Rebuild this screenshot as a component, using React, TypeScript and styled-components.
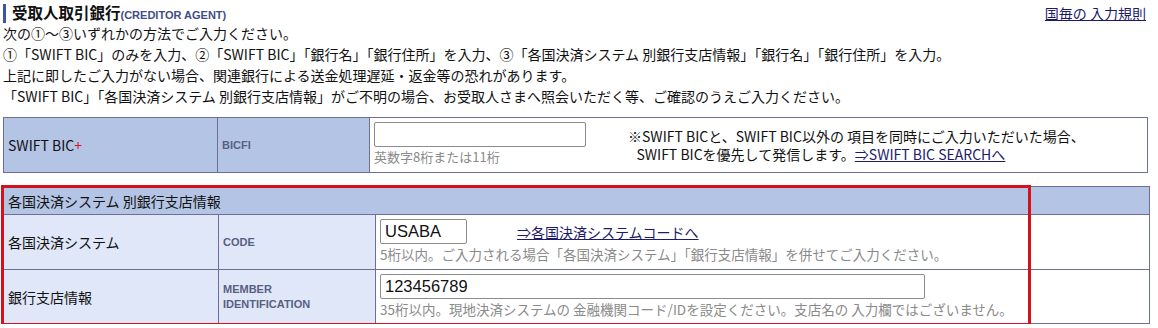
import React from "react";
import styled, { createGlobalStyle } from "styled-components";

const Global = createGlobalStyle`
  html, body { margin: 0; padding: 0; background: #fff; }
  body {
    font-family: "Noto Sans CJK JP", "Liberation Sans", sans-serif;
    font-size: 14px;
    color: #111;
  }
`;

const Page = styled.div`
  width: 1158px;
  padding: 4px 0 0 3px;
  box-sizing: border-box;
`;

const TitleRow = styled.div`
  display: flex;
  justify-content: space-between;
  align-items: center;
  height: 18px;
  padding-right: 12px;
`;

const Title = styled.h2`
  margin: 0;
  display: flex;
  align-items: baseline;
  border-left: 3px solid #3d55a6;
  padding-left: 6px;
  font-size: 15.5px;
  line-height: 16px;
  font-weight: bold;
  color: #111;
  font-feature-settings: "palt";
`;

const TitleSub = styled.span`
  font-family: "Liberation Sans", sans-serif;
  font-size: 11px;
  font-weight: bold;
  color: #3f4d86;
`;

const NavLink = styled.a<{ $size?: number }>`
  color: #1c1a6a;
  text-decoration: underline;
  font-size: ${(p) => p.$size ?? 14}px;
  cursor: pointer;
`;

const Intro = styled.div`
  margin-top: 1px;
  line-height: 21px;
  font-size: 14px;
`;

const Grid = styled.div<{ $cols: string; $width: number }>`
  display: grid;
  grid-template-columns: ${(p) => p.$cols};
  width: ${(p) => p.$width}px;
  gap: 1px;
  padding: 1px;
  box-sizing: border-box;
  background: #6c7098;
`;

const Cell = styled.div<{ $bg?: string; $h?: number; $span?: number }>`
  background: ${(p) => p.$bg ?? "#fff"};
  min-height: ${(p) => p.$h ?? 0}px;
  ${(p) => (p.$span ? `grid-column: span ${p.$span};` : "")}
  display: flex;
  align-items: center;
  padding: 0 4px;
  box-sizing: border-box;
`;

const InputCell = styled.div<{ $h: number }>`
  background: #fff;
  min-height: ${(p) => p.$h}px;
  padding: 4px 4px 0;
  box-sizing: border-box;
  display: flex;
  flex-direction: column;
`;

const Label = styled.span`
  font-size: 14px;
`;

const Req = styled.span`
  color: #e0101a;
`;

const Key = styled.span`
  font-family: "Liberation Sans", sans-serif;
  font-size: 11px;
  font-weight: bold;
  color: #5a5f82;
  line-height: 15px;
`;

const Input = styled.input<{ $w: number }>`
  width: ${(p) => p.$w}px;
  height: 25px;
  box-sizing: border-box;
  border: 1px solid #8c8c8c;
  border-radius: 2px;
  padding: 0 4px;
  font-family: "Liberation Sans", sans-serif;
  font-size: 16.5px;
  color: #111;
  outline: none;
`;

const Hint = styled.div<{ $size?: number }>`
  color: #8a8a8a;
  font-size: ${(p) => p.$size ?? 13.5}px;
  line-height: 14px;
  margin-top: 3px;
  white-space: nowrap;
`;

const InputLine = styled.div`
  display: flex;
  align-items: center;
  gap: 50px;
`;

const BicRow = styled.div`
  display: flex;
  align-items: flex-start;
  gap: 42px;
`;

const Note = styled.div`
  margin-top: 5px;
  font-size: 14px;
  line-height: 18px;
  padding-left: 0.6em;
  text-indent: -0.6em;
  color: #111;
`;

const Section = styled.div`
  position: relative;
  margin-top: 13px;
`;

const Highlight = styled.div`
  position: absolute;
  left: -2px;
  top: -1px;
  width: 1030px;
  height: 141px;
  border: 3px solid #d2131d;
  box-sizing: border-box;
  pointer-events: none;
`;

const LIGHT = "#dfe7f8";
const BLUE = "#b4c4e5";

export default function App() {
  return (
    <>
      <Global />
      <Page>
        <TitleRow>
          <Title>
            受取人取引銀行<TitleSub>(CREDITOR AGENT)</TitleSub>
          </Title>
          <NavLink $size={14}>国毎の 入力規則</NavLink>
        </TitleRow>
        <Intro>
          次の①～③いずれかの方法でご入力ください。
          <br />
          ①「SWIFT BIC」のみを入力、②「SWIFT BIC」「銀行名」「銀行住所」を入力、③「各国決済システム 別銀行支店情報」「銀行名」「銀行住所」を入力。
          <br />
          上記に即したご入力がない場合、関連銀行による送金処理遅延・返金等の恐れがあります。
          <br />
          「SWIFT BIC」「各国決済システム 別銀行支店情報」がご不明の場合、お受取人さまへ照会いただく等、ご確認のうえご入力ください。
        </Intro>

        <Grid $cols="213px 151px 1fr" $width={1145} style={{ marginTop: 10 }}>
          <Cell $bg={BLUE} $h={54}>
            <Label>
              SWIFT BIC<Req>+</Req>
            </Label>
          </Cell>
          <Cell $bg={BLUE}>
            <Key>BICFI</Key>
          </Cell>
          <InputCell $h={54}>
            <BicRow>
              <div>
                <Input $w={212} defaultValue="" />
                <Hint $size={13}>英数字8桁または11桁</Hint>
              </div>
              <Note>
                ※SWIFT BICと、SWIFT BIC以外の 項目を同時にご入力いただいた場合、
                <br />
                SWIFT BICを優先して発信します。<NavLink $size={14}>⇒SWIFT BIC SEARCHへ</NavLink>
              </Note>
            </BicRow>
          </InputCell>
        </Grid>

        <Section>
          <Grid $cols="214px 156px 654px 1fr" $width={1147}>
            <Cell $bg={BLUE} $h={27} $span={4}>
              <Label>各国決済システム 別銀行支店情報</Label>
            </Cell>

            <Cell $bg={LIGHT} $h={54}>
              <Label>各国決済システム</Label>
            </Cell>
            <Cell $bg={LIGHT}>
              <Key>CODE</Key>
            </Cell>
            <InputCell $h={54}>
              <InputLine>
                <Input $w={87} defaultValue="USABA" />
                <NavLink $size={14}>⇒各国決済システムコードへ</NavLink>
              </InputLine>
              <Hint>5桁以内。ご入力される場合「各国決済システム」「銀行支店情報」を併せてご入力ください。</Hint>
            </InputCell>
            <Cell />

            <Cell $bg={LIGHT} $h={53}>
              <Label>銀行支店情報</Label>
            </Cell>
            <Cell $bg={LIGHT}>
              <Key>
                MEMBER
                <br />
                IDENTIFICATION
              </Key>
            </Cell>
            <InputCell $h={53}>
              <Input $w={545} defaultValue="123456789" />
              <Hint>35桁以内。現地決済システムの 金融機関コード/IDを設定ください。支店名の 入力欄ではございません。</Hint>
            </InputCell>
            <Cell />
          </Grid>
          <Highlight />
        </Section>
      </Page>
    </>
  );
}
